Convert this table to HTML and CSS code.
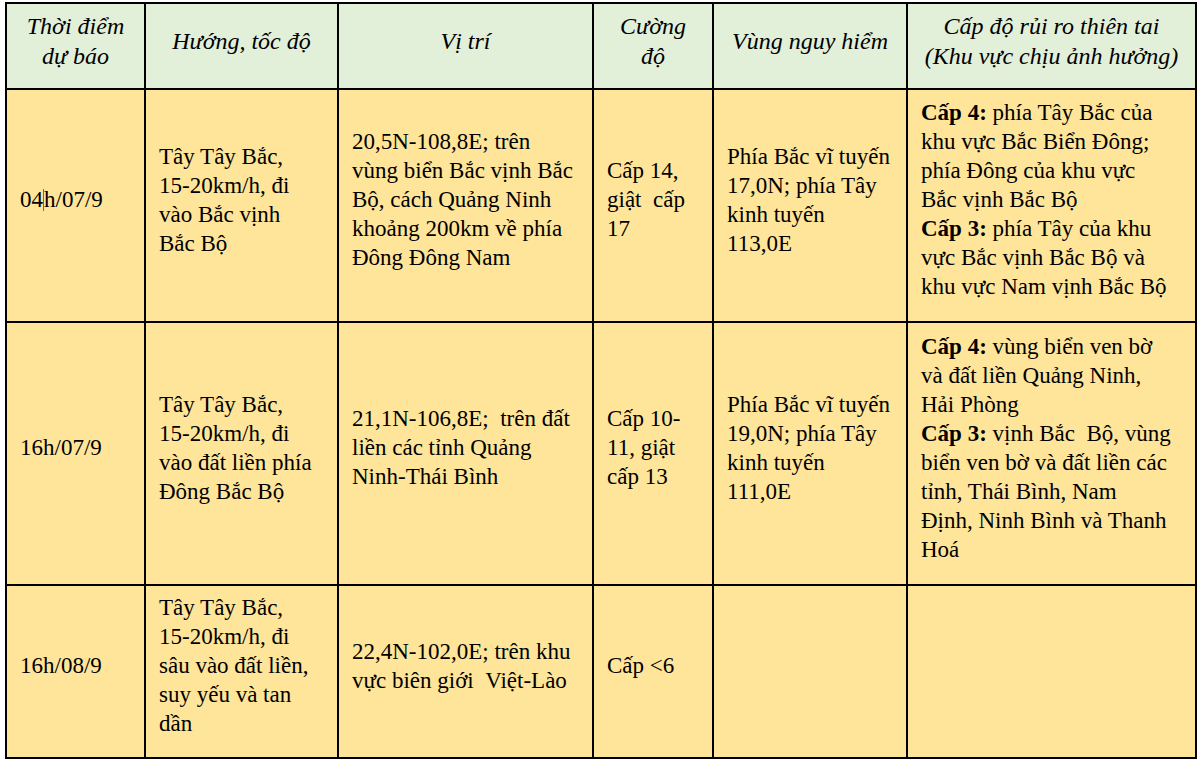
FILE: index.html
```html
<!DOCTYPE html>
<html>
<head>
<meta charset="utf-8">
<title>Dự báo bão</title>
<link rel="stylesheet" href="styles.css">
</head>
<body>
<table class="forecast">
  <colgroup>
    <col class="c1"><col class="c2"><col class="c3"><col class="c4"><col class="c5"><col class="c6">
  </colgroup>
  <thead>
    <tr class="head">
      <th>Thời điểm<br>dự báo</th>
      <th>Hướng, tốc độ</th>
      <th>Vị trí</th>
      <th>Cường<br>độ</th>
      <th>Vùng nguy hiểm</th>
      <th>Cấp độ rủi ro thiên tai<br>(Khu vực chịu ảnh hưởng)</th>
    </tr>
  </thead>
  <tbody>
    <tr class="r1">
      <td class="odd">04<span class="caret"></span>h/07/9</td>
      <td>Tây Tây Bắc,<br>15-20km/h, đi<br>vào Bắc vịnh<br>Bắc Bộ</td>
      <td class="odd">20,5N-108,8E; trên<br>vùng biển Bắc vịnh Bắc<br>Bộ, cách Quảng Ninh<br>khoảng 200km về phía<br>Đông Đông Nam</td>
      <td class="odd">Cấp 14,<br>giật &nbsp;cấp<br>17</td>
      <td>Phía Bắc vĩ tuyến<br>17,0N; phía Tây<br>kinh tuyến<br>113,0E</td>
      <td class="odd"><b>Cấp 4:</b> phía Tây Bắc của<br>khu vực Bắc Biển Đông;<br>phía Đông của khu vực<br>Bắc vịnh Bắc Bộ<br><b>Cấp 3:</b> phía Tây của khu<br>vực Bắc vịnh Bắc Bộ và<br>khu vực Nam vịnh Bắc Bộ</td>
    </tr>
    <tr class="r2">
      <td class="odd">16h/07/9</td>
      <td>Tây Tây Bắc,<br>15-20km/h, đi<br>vào đất liền phía<br>Đông Bắc Bộ</td>
      <td class="odd">21,1N-106,8E; &nbsp;trên đất<br>liền các tỉnh Quảng<br>Ninh-Thái Bình</td>
      <td class="odd">Cấp 10-<br>11, giật<br>cấp 13</td>
      <td>Phía Bắc vĩ tuyến<br>19,0N; phía Tây<br>kinh tuyến<br>111,0E</td>
      <td><b>Cấp 4:</b> vùng biển ven bờ<br>và đất liền Quảng Ninh,<br>Hải Phòng<br><b>Cấp 3:</b> vịnh Bắc &nbsp;Bộ, vùng<br>biển ven bờ và đất liền các<br>tỉnh, Thái Bình, Nam<br>Định, Ninh Bình và Thanh<br>Hoá</td>
    </tr>
    <tr class="r3">
      <td class="odd">16h/08/9</td>
      <td class="odd">Tây Tây Bắc,<br>15-20km/h, đi<br>sâu vào đất liền,<br>suy yếu và tan<br>dần</td>
      <td>22,4N-102,0E; trên khu<br>vực biên giới &nbsp;Việt-Lào</td>
      <td class="odd">Cấp &lt;6</td>
      <td></td>
      <td></td>
    </tr>
  </tbody>
</table>
</body>
</html>
```
FILE: styles.css
```css
html, body {
  margin: 0;
  background: #ffffff;
}
body {
  padding: 2px 0 0 5px;
  font-family: "Liberation Serif", "Times New Roman", serif;
  color: #000000;
}
.forecast {
  border-collapse: collapse;
  table-layout: fixed;
  width: 1190px;
  font-family: "Liberation Serif", "Times New Roman", serif;
  font-size: 23px;
  line-height: 29px;
}
.c1 { width: 139px; }
.c2 { width: 193px; }
.c3 { width: 255px; }
.c4 { width: 120px; }
.c5 { width: 194px; }
.c6 { width: 289px; }
.forecast th,
.forecast td {
  border: 2px solid #000;
  vertical-align: middle;
  white-space: nowrap;
  color: #000000;
}
.forecast th {
  background: #e2efd9;
  font-weight: normal;
  font-style: italic;
  font-size: 24px;
  text-align: center;
  line-height: 30px;
  padding: 0 4px 10px;
}
.forecast td {
  background: #ffe599;
  text-align: left;
  padding: 3px 4px 14px 13px;
}
.forecast td.odd {
  padding-bottom: 15px;
}
.forecast td b {
  font-weight: bold;
}
.head { height: 86px; }
.r1 { height: 233px; }
.r2 { height: 263px; }
.r3 { height: 173px; }
.caret {
  display: inline-block;
  width: 0;
  height: 22px;
  border-left: 1px solid #6a6a6a;
  vertical-align: -4px;
}
```
